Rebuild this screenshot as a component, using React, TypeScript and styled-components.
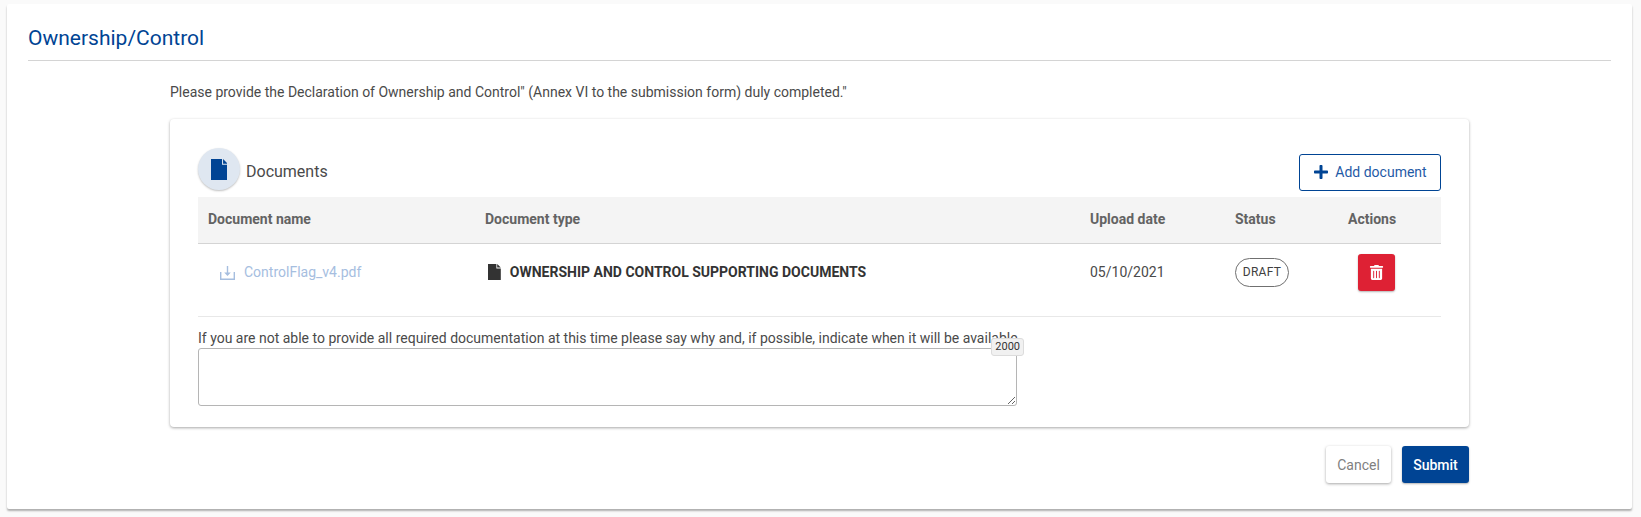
import styled, { createGlobalStyle } from "styled-components";
import { FaPlus, FaTrashAlt } from "react-icons/fa";

const GlobalStyle = createGlobalStyle`
  html, body {
    margin: 0;
    padding: 0;
    background-color: #fafafa;
    font-family: Roboto, "Liberation Sans", sans-serif;
    color: #404040;
  }
`

const Page = styled.div`
  height: 517px;
  padding: 4px 9px 0 7px;
  box-sizing: border-box;
`

const Panel = styled.section`
  height: 505px;
  padding: 0 21px;
  box-sizing: border-box;
  background-color: #fff;
  box-shadow: 0 2px 2px rgba(0, 0, 0, 0.3);
  border-radius: 2px;
`

const PanelTitle = styled.h2`
  margin: 0;
  height: 57px;
  padding-top: 21px;
  box-sizing: border-box;
  border-bottom: 1px solid #d4d4d4;
  font-size: 21px;
  line-height: 27px;
  font-weight: 400;
  color: #004494;
`

const Content = styled.div`
  margin: 0 142px;
`

const Intro = styled.p`
  margin: 0;
  padding-top: 23px;
  font-size: 14px;
  line-height: 16px;
  color: #4a4a4a;
`

const Card = styled.div`
  margin-top: 19px;
  height: 308px;
  padding: 29px 28px 0;
  box-sizing: border-box;
  border-radius: 4px;
  background-color: #fff;
  box-shadow: 0 1px 3px rgba(0, 0, 0, 0.35);
`

const CardHeader = styled.div`
  display: flex;
  align-items: flex-start;
  justify-content: space-between;
  height: 49px;
`

const CardTitle = styled.div`
  display: flex;
  align-items: center;
  gap: 6px;
  font-size: 16px;
  color: #4a4a4a;
`

const CardTitleText = styled.span`
  padding-top: 4px;
`

const IconCircle = styled.span`
  display: flex;
  align-items: center;
  justify-content: center;
  width: 42px;
  height: 42px;
  border-radius: 50%;
  background-color: #dfe7f1;
  box-shadow: 0 1px 2px rgba(0, 0, 0, 0.25);
`

const OutlineButton = styled.button`
  display: flex;
  align-items: center;
  justify-content: center;
  gap: 6px;
  width: 142px;
  height: 37px;
  margin-top: 6px;
  padding: 0 0 1px;
  border: 1px solid #004494;
  border-radius: 3px;
  background-color: #fff;
  font-family: inherit;
  font-size: 14px;
  color: #1f5aa6;
`

const Table = styled.table`
  width: 100%;
  table-layout: fixed;
  border-collapse: collapse;
`

const HeadCell = styled.th<{ $width: number }>`
  width: ${p => p.$width}px;
  height: 46px;
  padding: 0 10px 1px;
  box-sizing: border-box;
  background-color: #f4f4f4;
  border-bottom: 1px solid #d4d4d4;
  text-align: left;
  font-size: 14px;
  font-weight: 700;
  color: #636363;
`

const Cell = styled.td`
  height: 73px;
  padding: 0 10px 15px;
  box-sizing: border-box;
  border-bottom: 1px solid #e8e8e8;
  font-size: 14px;
  color: #4a4a4a;
`

const FileLink = styled.a`
  display: flex;
  align-items: center;
  gap: 9px;
  padding-left: 12px;
  font-size: 14px;
  color: #a6bedf;
`

const DocType = styled.span`
  display: flex;
  align-items: center;
  gap: 9px;
  margin-left: 3px;
  font-size: 14px;
  font-weight: 700;
  color: #333;
`

const StatusPill = styled.span`
  display: inline-flex;
  align-items: center;
  justify-content: center;
  width: 54px;
  height: 29px;
  box-sizing: border-box;
  border: 1px solid #707070;
  border-radius: 15px;
  font-size: 12px;
  letter-spacing: 0.3px;
  color: #404040;
`

const DeleteButton = styled.button`
  display: flex;
  align-items: center;
  justify-content: center;
  width: 37px;
  height: 37px;
  margin-left: 10px;
  padding: 0;
  border: none;
  border-radius: 3px;
  background-color: #de2134;
  box-shadow: 0 1px 2px rgba(0, 0, 0, 0.3);
  color: #fff;
`

const CommentField = styled.div`
  position: relative;
  width: 819px;
  margin-top: 12px;
`

const CommentLabel = styled.label`
  display: block;
  font-size: 14px;
  line-height: 19px;
  color: #4a4a4a;
  white-space: nowrap;
`

const CommentInput = styled.textarea`
  display: block;
  width: 100%;
  height: 58px;
  margin: 0;
  padding: 4px;
  box-sizing: border-box;
  border: 1px solid #b5b5b5;
  border-radius: 3px;
  background-color: #fff;
`

const Counter = styled.span`
  position: absolute;
  top: 9px;
  right: -7px;
  padding: 0 3px;
  height: 16px;
  border: 1px solid #dcdcdc;
  border-radius: 3px;
  background-color: #f1f1f1;
  font-size: 11px;
  line-height: 16px;
  color: #333;
`

const Footer = styled.div`
  display: flex;
  justify-content: flex-end;
  gap: 11px;
  margin-top: 19px;
`

const CancelButton = styled.button`
  width: 65px;
  height: 37px;
  padding: 0;
  border: none;
  border-radius: 3px;
  background-color: #fff;
  box-shadow: 0 1px 3px rgba(0, 0, 0, 0.35);
  font-family: inherit;
  font-size: 14px;
  color: #7f7f7f;
`

const SubmitButton = styled.button`
  width: 67px;
  height: 37px;
  padding: 0;
  border: none;
  border-radius: 3px;
  background-color: #004494;
  box-shadow: 0 1px 2px rgba(0, 0, 0, 0.3);
  font-family: inherit;
  font-size: 14px;
  font-weight: 500;
  color: #fff;
`

function FileIcon({ color, size }: { color: string; size: number }) {
    return (
        <svg width={size * 0.8} height={size} viewBox="0 0 16 20">
            <path d="M0 0H10.5V5.5H16V20H0Z" fill={color}/>
            <path d="M11.5 0L16 4.5H11.5Z" fill={color}/>
        </svg>
    )
}

function DownloadIcon() {
    return (
        <svg width="15" height="15" viewBox="0 0 15 15" fill="#a6bedf">
            <path d="M0 7H1.4V13.4H13.6V7H15V15H0Z"/>
            <path d="M6.8 1H8.2V7.5H10.8L7.5 11L4.2 7.5H6.8Z"/>
        </svg>
    )
}

export default function App() {
    return (
        <Page>
            <GlobalStyle/>
            <Panel>
                <PanelTitle>Ownership/Control</PanelTitle>
                <Content>
                    <Intro>
                        Please provide the Declaration of Ownership and Control" (Annex VI to the submission form) duly completed."
                    </Intro>
                    <Card>
                        <CardHeader>
                            <CardTitle>
                                <IconCircle>
                                    <FileIcon color="#004494" size={21}/>
                                </IconCircle>
                                <CardTitleText>Documents</CardTitleText>
                            </CardTitle>
                            <OutlineButton>
                                <FaPlus size={16} color="#004494"/>
                                Add document
                            </OutlineButton>
                        </CardHeader>
                        <Table>
                            <thead>
                                <tr>
                                    <HeadCell $width={277}>Document name</HeadCell>
                                    <HeadCell $width={605}>Document type</HeadCell>
                                    <HeadCell $width={145}>Upload date</HeadCell>
                                    <HeadCell $width={113}>Status</HeadCell>
                                    <HeadCell $width={103}>Actions</HeadCell>
                                </tr>
                            </thead>
                            <tbody>
                                <tr>
                                    <Cell>
                                        <FileLink>
                                            <DownloadIcon/>
                                            ControlFlag_v4.pdf
                                        </FileLink>
                                    </Cell>
                                    <Cell>
                                        <DocType>
                                            <FileIcon color="#333" size={16}/>
                                            OWNERSHIP AND CONTROL SUPPORTING DOCUMENTS
                                        </DocType>
                                    </Cell>
                                    <Cell>05/10/2021</Cell>
                                    <Cell><StatusPill>DRAFT</StatusPill></Cell>
                                    <Cell>
                                        <DeleteButton><FaTrashAlt size={15}/></DeleteButton>
                                    </Cell>
                                </tr>
                            </tbody>
                        </Table>
                        <CommentField>
                            <CommentLabel>
                                If you are not able to provide all required documentation at this time please say why and, if possible, indicate when it will be available
                            </CommentLabel>
                            <CommentInput/>
                            <Counter>2000</Counter>
                        </CommentField>
                    </Card>
                    <Footer>
                        <CancelButton>Cancel</CancelButton>
                        <SubmitButton>Submit</SubmitButton>
                    </Footer>
                </Content>
            </Panel>
        </Page>
    )
}
